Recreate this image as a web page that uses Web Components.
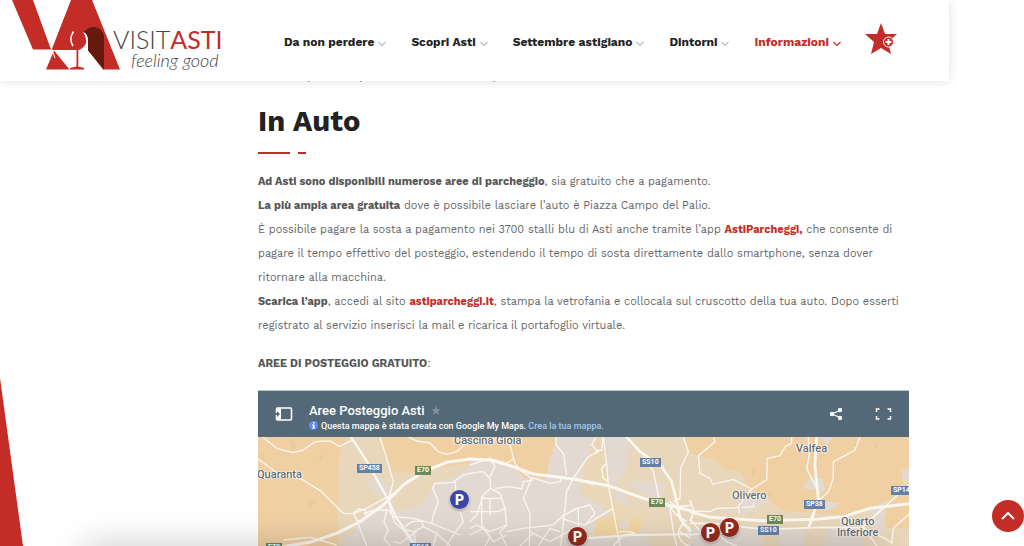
<!DOCTYPE html>
<html lang="it">
<head>
<meta charset="utf-8">
<meta name="viewport" content="width=device-width, initial-scale=1">
<title>In Auto - Visit Asti</title>
<style>
    :root {
        --red: #c32c27;
        --dark: #222;
        --text: #666;
    }
    body {
        margin: 0;
        background: white;
        color: var(--text);
        font-family: "Work Sans", Inter, "Liberation Sans", sans-serif;
    }
</style>
</head>
<body>
<visit-page>
    <site-header slot="header">
        <nav-item>Da non perdere</nav-item>
        <nav-item>Scopri Asti</nav-item>
        <nav-item>Settembre astigiano</nav-item>
        <nav-item>Dintorni</nav-item>
        <nav-item active>Informazioni</nav-item>
    </site-header>
    <parking-article></parking-article>
    <my-map>
        <span slot="title">Aree Posteggio Asti</span>
        <map-label style="left: 196px; top: -4px">Cascina Gioia</map-label>
        <map-label style="left: -1px; top: 30px">Quaranta</map-label>
        <map-label style="left: 538px; top: 4px">Valfea</map-label>
        <map-label style="left: 474px; top: 51px">Olivero</map-label>
        <map-label style="left: 579px; top: 77px">Quarto<br>Inferiore</map-label>
        <road-shield style="left: 99px; top: 27px">SP458</road-shield>
        <road-shield green style="left: 157px; top: 29px">E70</road-shield>
        <road-shield green style="left: 8px; top: 106px">E70</road-shield>
        <road-shield style="left: 152px; top: 106px">SS10</road-shield>
        <road-shield style="left: 382px; top: 21px">SS10</road-shield>
        <road-shield green style="left: 391px; top: 61px">E70</road-shield>
        <road-shield style="left: 546px; top: 63px">SP38</road-shield>
        <road-shield green style="left: 509px; top: 78px">E70</road-shield>
        <road-shield style="left: 500px; top: 89px">SS10</road-shield>
        <road-shield style="left: 633px; top: 49px">SP14</road-shield>
        <map-pin blue style="left: 192px; top: 53px">P</map-pin>
        <map-pin style="left: 310px; top: 90px">P</map-pin>
        <map-pin style="left: 443px; top: 86px">P</map-pin>
        <map-pin style="left: 462px; top: 81px">P</map-pin>
    </my-map>
    <scroll-top slot="overlay"></scroll-top>
</visit-page>

<script>
class VisitPage extends HTMLElement {
    connectedCallback() {
        this.attachShadow({ mode: 'open' });
        this.shadowRoot.innerHTML = `
            <style>
                :host {
                    display: flex;
                    flex-direction: column;
                    position: relative;
                    height: 100vh;
                    overflow: hidden;
                }
                main {
                    flex: 1;
                    min-height: 0;
                    display: flex;
                    flex-direction: column;
                    padding: 0 115px 0 258px;
                }
                .wedge {
                    position: absolute;
                    left: 0;
                    bottom: 0;
                    width: 23px;
                    height: 168px;
                    background: var(--red);
                    clip-path: polygon(0 0, 100% 100%, 0 100%);
                }
                .shade {
                    position: absolute;
                    left: 84px;
                    right: 140px;
                    bottom: -20px;
                    height: 20px;
                    box-shadow: 0 0 32px rgba(0,0,0,0.25);
                    pointer-events: none;
                }
            </style>
            <slot name="header"></slot>
            <main><slot></slot></main>
            <div class="wedge"></div>
            <div class="shade"></div>
            <slot name="overlay"></slot>
        `;
    }
}
customElements.define('visit-page', VisitPage);

class SiteHeader extends HTMLElement {
    connectedCallback() {
        this.attachShadow({ mode: 'open' });
        this.shadowRoot.innerHTML = `
            <style>
                :host {
                    display: flex;
                    align-items: center;
                    height: 81px;
                    margin-right: 75px;
                    background: white;
                    box-shadow: 0 0 10px rgba(0,0,0,0.12);
                }
                .logo {
                    width: 250px;
                    height: 81px;
                }
                .logo svg, .star svg {
                    display: block;
                }
                nav {
                    display: flex;
                    gap: 25px;
                    padding-left: 34px;
                    padding-top: 3px;
                }
                .star {
                    margin-left: 24px;
                    padding: 0 0 4px;
                    border: 0;
                    background: none;
                    cursor: pointer;
                }
            </style>
            <a class="logo" href="#" aria-label="Visit Asti">
                <svg width="250" height="81" viewBox="0 0 250 81">
                    <path fill="#c32c27" d="M12 0H33L51 49.500H33ZM71 0H92L120 69.500H103L88 50H51.500ZM54 50.500L69.500 69.500H46Z"/>
                    <path fill="#fff" d="M83 32Q89 34 88.500 42V50.500H78Q86 47 86.300 41Q86 36 83 32Z"/>
                    <path fill="#641b0e" d="M84 31.500Q91 25 98 28Q104 31 104 38V69.500L88 50.500V41Q88 34 84 31.500Z"/>
                    <path fill="none" stroke="#fff" stroke-width="1.500" d="M73.500 31.500Q68.500 39 73 46"/>
                    <path fill="none" stroke="#fff" d="M34 0L55 58"/>
                    <path fill="#c32c27" d="M76.500 49H78.300V66.500L84 68V69.500H70V68L76.500 66.500Z"/>
                    <text x="113" y="49" font-family="Lato" font-size="25" font-weight="300" fill="#444">VISIT<tspan font-weight="400" fill="#c32c27">ASTI</tspan></text>
                    <text x="131" y="67" font-family="Lato" font-size="18" font-style="italic" font-weight="300" fill="#444">feeling good</text>
                </svg>
            </a>
            <nav><slot></slot></nav>
            <button class="star" aria-label="Preferiti">
                <svg width="32" height="34" viewBox="0 0 32 34">
                    <path fill="#c32c27" d="M16 1L20 12L32 12L23 20L26 32L16 26L6 32L9 20L0 12L12 12Z"/>
                    <circle cx="23.500" cy="20" r="5" fill="#c32c27" stroke="#fff"/>
                    <path stroke="#fff" stroke-width="2" d="M23.500 17V23M20.500 20H26.500"/>
                </svg>
            </button>
        `;
    }
}
customElements.define('site-header', SiteHeader);

class NavItem extends HTMLElement {
    connectedCallback() {
        this.attachShadow({ mode: 'open' });
        this.shadowRoot.innerHTML = `
            <style>
                :host {
                    display: block;
                    --arrow: #bbb;
                    color: var(--dark);
                }
                :host([active]) {
                    --arrow: var(--red);
                    color: var(--red);
                }
                a {
                    display: flex;
                    align-items: center;
                    gap: 4px;
                    color: inherit;
                    font-size: 12px;
                    font-weight: 700;
                    line-height: 20px;
                    text-decoration: none;
                    white-space: nowrap;
                }
                svg {
                    margin-top: 3px;
                }
            </style>
            <a href="#">
                <slot></slot>
                <svg width="8" height="6" viewBox="0 0 8 6" fill="none" stroke="var(--arrow)" stroke-width="1.200"><path d="M.5 1L4 4.500L7.500 1"/></svg>
            </a>
        `;
    }
}
customElements.define('nav-item', NavItem);

class ParkingArticle extends HTMLElement {
    connectedCallback() {
        this.attachShadow({ mode: 'open' });
        this.shadowRoot.innerHTML = `
            <style>
                :host {
                    display: block;
                }
                .tails {
                    display: block;
                    height: 20px;
                }
                h2 {
                    margin: 0;
                    color: var(--dark);
                    font-size: 29px;
                    font-weight: 700;
                    line-height: 40px;
                }
                .rule {
                    display: flex;
                    gap: 8px;
                    margin: 11px 0 16px;
                }
                .rule i {
                    width: 8px;
                    height: 2px;
                    background: var(--red);
                }
                .rule i:first-child {
                    width: 32px;
                }
                p {
                    margin: 0 0 14px;
                    font-size: 11px;
                    line-height: 24px;
                    white-space: nowrap;
                }
                strong {
                    font-weight: 700;
                    color: #555;
                }
                a {
                    color: var(--red);
                    font-weight: 700;
                    text-decoration: none;
                }
            </style>
            <!-- descenders of the line scrolled under the header -->
            <svg class="tails" width="240" height="20" aria-hidden="true"><path fill="#aaa" d="M50 0H52V1H50ZM102 0H104V1H102ZM235 0H237V1H235Z"/></svg>
            <h2>In Auto</h2>
            <div class="rule"><i></i><i></i></div>
            <p>
                <strong>Ad Asti sono disponibili numerose aree di parcheggio</strong>, sia gratuito che a pagamento.<br>
                <strong>La più ampia area gratuita</strong> dove è possibile lasciare l’auto è Piazza Campo del Palio.<br>
                È possibile pagare la sosta a pagamento nei 3700 stalli blu di Asti anche tramite l’app <a href="#">AstiParcheggi,</a> che consente di<br>
                pagare il tempo effettivo del posteggio, estendendo il tempo di sosta direttamente dallo smartphone, senza dover<br>
                ritornare alla macchina.<br>
                <strong>Scarica l’app</strong>, accedi al sito <a href="#">astiparcheggi.it</a>, stampa la vetrofania e collocala sul cruscotto della tua auto. Dopo esserti<br>
                registrato al servizio inserisci la mail e ricarica il portafoglio virtuale.
            </p>
            <p><strong>AREE DI POSTEGGIO GRATUITO</strong>:</p>
        `;
    }
}
customElements.define('parking-article', ParkingArticle);

class MyMap extends HTMLElement {
    connectedCallback() {
        this.attachShadow({ mode: 'open' });
        this.shadowRoot.innerHTML = `
            <style>
                :host {
                    flex: 1;
                    min-height: 0;
                    display: flex;
                    flex-direction: column;
                    font-family: Roboto, "Liberation Sans", sans-serif;
                }
                header {
                    display: flex;
                    align-items: center;
                    gap: 16px;
                    height: 47px;
                    padding: 0 17px;
                    background: #546977;
                    border-top: 1px solid #b5c5c8;
                    box-sizing: border-box;
                    color: white;
                }
                .info {
                    flex: 1;
                    padding-top: 6px;
                }
                .title, .note {
                    display: flex;
                    align-items: center;
                }
                .title {
                    gap: 7px;
                    font-size: 13px;
                    font-weight: 500;
                    line-height: 17px;
                }
                .note {
                    gap: 3px;
                    font-size: 9px;
                    font-weight: 500;
                    line-height: 14px;
                }
                .note a {
                    color: #a0c8ee;
                    text-decoration: none;
                }
                button {
                    padding: 0;
                    border: 0;
                    background: none;
                    cursor: pointer;
                }
                .share {
                    margin-right: 16px;
                }
                svg {
                    display: block;
                }
                .canvas {
                    flex: 1;
                    min-height: 0;
                    position: relative;
                    overflow: hidden;
                    background: #e9d7bb;
                }
                .canvas svg {
                    width: 100%;
                }
            </style>
            <header>
                <button aria-label="Legenda">
                    <svg width="18" height="14" viewBox="0 0 18 14"><rect x="1.500" y="1" width="15" height="12" rx="1" fill="none" stroke="#fff" stroke-width="1.500"/><path fill="#fff" d="M1 1H6V13H1Z"/><path fill="#546977" d="M0 6H2V4L5 7L2 10V8H0Z"/></svg>
                </button>
                <div class="info">
                    <div class="title"><slot name="title"></slot>
                        <svg width="10" height="10" viewBox="0 0 10 10"><path fill="#82919c" d="M5 0L6 4H10L7 6L8 10L5 8L2 10L3 6L0 4H4Z"/></svg>
                    </div>
                    <div class="note">
                        <svg width="9" height="9" viewBox="0 0 9 9"><circle cx="4.500" cy="4.500" r="4.500" fill="#5b8def"/><path fill="#fff" d="M4 1H5.500V2.500H4ZM3 3.500H5.500V6.500H6V7.500H3V6.500H4V4.500H3Z"/></svg>
                        <span>Questa mappa è stata creata con Google My Maps. <a href="#">Crea la tua mappa.</a></span>
                    </div>
                </div>
                <button class="share" aria-label="Condividi">
                    <svg width="14" height="14" viewBox="0 0 14 14" fill="#fff"><path d="M12 3L3 7L12 11" fill="none" stroke="#fff" stroke-width="1.300"/><circle cx="3" cy="7" r="2.200"/><circle cx="11" cy="3" r="2.200"/><circle cx="11" cy="11" r="2.200"/></svg>
                </button>
                <button aria-label="Schermo intero">
                    <svg width="17" height="14" viewBox="0 0 17 14" fill="none" stroke="#fff" stroke-width="1.500"><path d="M1.500 5V2H4.500M12.500 2H15.500V5M15.500 9V12H12.500M4.500 12H1.500V9"/></svg>
                </button>
            </header>
            <div class="canvas">
                <svg viewBox="0 0 1953 390">
                    <!-- west -->
                    <g transform="translate(-24 -156)">
                        <path fill="#f0d0a3" d="M24 156H298L270 185L262 300V540H24ZM385 156H662V235L540 250L520 262H430L400 190Z"/>
                        <path fill="#e3d9d0" d="M350 290L385 270L422 315L430 380L510 362L552 300L662 250V540H275L280 460L310 445L340 380L415 345L370 325Z"/>
                        <path fill="#e9cb9a" d="M120 170L130 160L138 185L128 195ZM205 215L220 205L215 235ZM175 345L195 352L180 370ZM30 210L48 205L40 222Z"/>
                    </g>
                    <!-- centre -->
                    <g transform="translate(636 -156)">
                        <path fill="#e3d9d0" d="M0 200H230L262 156H480L470 250L440 300L520 420L560 540H0ZM470 290L585 290L580 330L560 345L510 325Z"/>
                        <path fill="#f0d0a3" d="M0 156H262L240 220L228 282L195 275L165 280L130 240L60 225H0ZM640 156H660V200Z"/>
                        <path fill="#ead7b8" d="M370 156H398L415 200L410 290L440 305L435 350L520 380L522 420L440 410L380 350L330 330L340 260Z"/>
                        <path fill="#f1d4a2" d="M383 400L440 395L450 430L475 435L480 405L515 395V430L500 450H400L370 450Z"/>
                    </g>
                    <!-- east -->
                    <g transform="translate(1296 -156)">
                        <path fill="#f0d0a3" d="M0 156H657V390L540 370L460 390L280 378L240 350L180 310L150 262L100 250L80 225L0 205ZM575 385L657 360V430L590 430Z"/>
                        <path fill="#e3d9d0" d="M335 310L365 275L400 282L405 320ZM370 345L450 355L425 375H372ZM130 360L200 330L240 345L160 390ZM635 255L657 250V300L640 300ZM540 375L590 345L580 440L550 450ZM0 430H220V540H0ZM270 435H345V540H255ZM410 430H520V540H390ZM390 156H425L410 185Z"/>
                        <path fill="#e9cb9a" d="M180 260L200 245L190 275ZM255 205L275 210L260 225ZM490 180L500 170L502 190ZM550 180L565 165L560 195ZM230 315L250 325L235 335Z"/>
                    </g>
                    <g fill="none" stroke="#fbf7f1" stroke-width="4" stroke-linejoin="round">
                        <g transform="translate(-24 -156)">
                            <path d="M38 156L80 190L130 203L160 195L195 170L240 168L268 184L306 167M24 222L90 270L155 282L215 320L280 385L310 386L350 370L440 320M390 156L410 220L430 290L415 345L432 410L465 440L490 483M475 156L500 168L540 174L565 200L590 208L620 200L660 165M310 385L325 372L345 375L350 395L335 410L320 405ZM318 400L350 483M340 385L375 375H415L430 395L490 400L545 415L630 450M545 415L550 390L565 350L548 310L555 295L610 292L640 270L662 265M410 375L402 410L415 435L402 460L420 483M465 425L485 410L515 408L520 425L490 440L470 435M520 425L560 445L550 483M490 440L500 483M560 445L600 483M630 380L640 410L610 450L590 483M615 290L620 345M430 470L450 475L500 440M100 465L180 457L260 480"/>
                            <path stroke-width="7" d="M303 156L345 220L415 345L440 400L490 470L505 500"/>
                            <path stroke-width="9" d="M70 490L180 472L260 445L330 410L400 360L460 300L520 260L590 232L662 222"/>
                        </g>
                        <g transform="translate(636 -156)">
                            <path d="M105 156L120 180L135 235L150 255L185 280L160 340L180 385L178 483M185 278L240 295L270 290L275 280H318L370 300M258 156V180L280 205L290 270M378 156L365 180L385 200L355 215L310 280L290 320L285 370L272 483M400 156L410 240L415 300L440 430L450 483M400 156L395 195L375 198M410 235L395 250L400 280L415 290M0 265L40 260L60 280L62 310L40 330L20 390L0 410M62 310L90 325L105 370L110 420L90 440L110 483M35 335V420L60 455L45 483M35 340H95M60 340V390M0 380H85L105 370M75 310L120 305L155 312L160 290L190 285M0 240L60 220L110 235L130 222M60 222L75 245L60 275M110 420L60 440L20 420L0 430M110 440L160 430L250 420L275 395L320 370L360 360L375 385L345 420L320 415L275 400M325 370V430M345 420L430 370M180 440L240 470L320 425M205 483L240 430L270 440M150 483L190 445M430 483L460 450L495 445L480 440H445M520 210L550 260L568 345M640 156L655 200L632 250L630 340L610 350M600 370L610 440L620 483M0 450L40 430L70 470L110 450"/>
                            <path d="M350 460L490 450L662 448" stroke-width="6"/>
                            <path stroke-width="8" d="M470 156L510 200L575 245L605 290L620 350L630 400L662 440"/>
                            <path stroke-width="9" d="M0 222L60 225L130 245L190 267L310 282L415 302L520 340L600 362L662 377"/>
                            <path stroke-width="5" d="M600 350L622 370L640 420L662 430M620 365L662 362M640 415Q625 430 625 450Q635 480 662 483M630 440L662 460M590 355L620 390L650 410"/>
                        </g>
                        <g transform="translate(1296 -156)">
                            <path d="M70 156L75 170L25 212L30 265L60 280L68 298L130 283L185 312L145 365L148 385M185 312L230 285L232 220L270 212L285 185L305 175V156M355 156L358 210L350 250L370 290L388 325M510 156L495 195L465 212L430 230V280L415 320L372 360L370 400L355 430M0 378L60 380L80 370L145 368M155 368L190 365L192 350M657 388L610 430L605 475L585 460L520 430M520 425L560 483M0 450L80 440L110 470L140 483M0 400L30 440L80 425"/>
                            <path stroke-width="8" d="M380 156L375 240L385 345L355 430"/>
                            <path stroke-width="9" d="M0 380L60 397L220 407L380 403L460 395L540 370L657 356"/>
                            <path stroke-width="5" d="M0 415L70 415L220 433L400 427L515 428L590 360L657 300M0 345L12 380L0 410"/>
                        </g>
                    </g>
                </svg>
                <slot></slot>
            </div>
        `;
    }
}
customElements.define('my-map', MyMap);

class MapLabel extends HTMLElement {
    connectedCallback() {
        this.attachShadow({ mode: 'open' });
        this.shadowRoot.innerHTML = `
            <style>
                :host {
                    display: block;
                    position: absolute;
                    color: #666b70;
                    font-size: 11px;
                    font-weight: 500;
                    line-height: 11px;
                    padding-top: 2px;
                    text-align: center;
                    white-space: nowrap;
                    text-shadow: 0 0 2px white, 1px 0 1px white, -1px 0 1px white;
                }
            </style>
            <slot></slot>
        `;
    }
}
customElements.define('map-label', MapLabel);

class RoadShield extends HTMLElement {
    connectedCallback() {
        this.attachShadow({ mode: 'open' });
        this.shadowRoot.innerHTML = `
            <style>
                :host {
                    display: block;
                    position: absolute;
                    padding: 0 2px;
                    background: #647fa9;
                    color: white;
                    font-size: 7px;
                    font-weight: 700;
                    line-height: 9px;
                    white-space: nowrap;
                }
                :host([green]) {
                    background: #698a5b;
                }
            </style>
            <slot></slot>
        `;
    }
}
customElements.define('road-shield', RoadShield);

class MapPin extends HTMLElement {
    connectedCallback() {
        this.attachShadow({ mode: 'open' });
        this.shadowRoot.innerHTML = `
            <style>
                :host {
                    display: flex;
                    align-items: center;
                    justify-content: center;
                    position: absolute;
                    width: 19px;
                    height: 19px;
                    border-radius: 50%;
                    background: #952b1e;
                    box-shadow: 0 0 1px 1px rgba(255,255,255,0.5), 0 1px 3px rgba(0,0,0,0.5);
                    color: white;
                    font-size: 14px;
                    font-weight: 900;
                }
                :host([blue]) {
                    background: #3b47a5;
                }
            </style>
            <slot></slot>
        `;
    }
}
customElements.define('map-pin', MapPin);

class ScrollTop extends HTMLElement {
    connectedCallback() {
        this.attachShadow({ mode: 'open' });
        this.shadowRoot.innerHTML = `
            <style>
                :host {
                    display: block;
                    position: absolute;
                    right: 0;
                    bottom: 14px;
                }
                button {
                    display: flex;
                    align-items: center;
                    justify-content: center;
                    width: 32px;
                    height: 32px;
                    padding: 0;
                    border: 0;
                    border-radius: 50%;
                    background: var(--red);
                    cursor: pointer;
                }
            </style>
            <button aria-label="Torna su">
                <svg width="14" height="8" viewBox="0 0 14 8" fill="none" stroke="#fff" stroke-width="2"><path d="M1 7L7 1L13 7"/></svg>
            </button>
        `;
        this.shadowRoot.querySelector('button').addEventListener('click', () => {
            window.scrollTo({ top: 0, behavior: 'smooth' });
        });
    }
}
customElements.define('scroll-top', ScrollTop);
</script>
</body>
</html>
